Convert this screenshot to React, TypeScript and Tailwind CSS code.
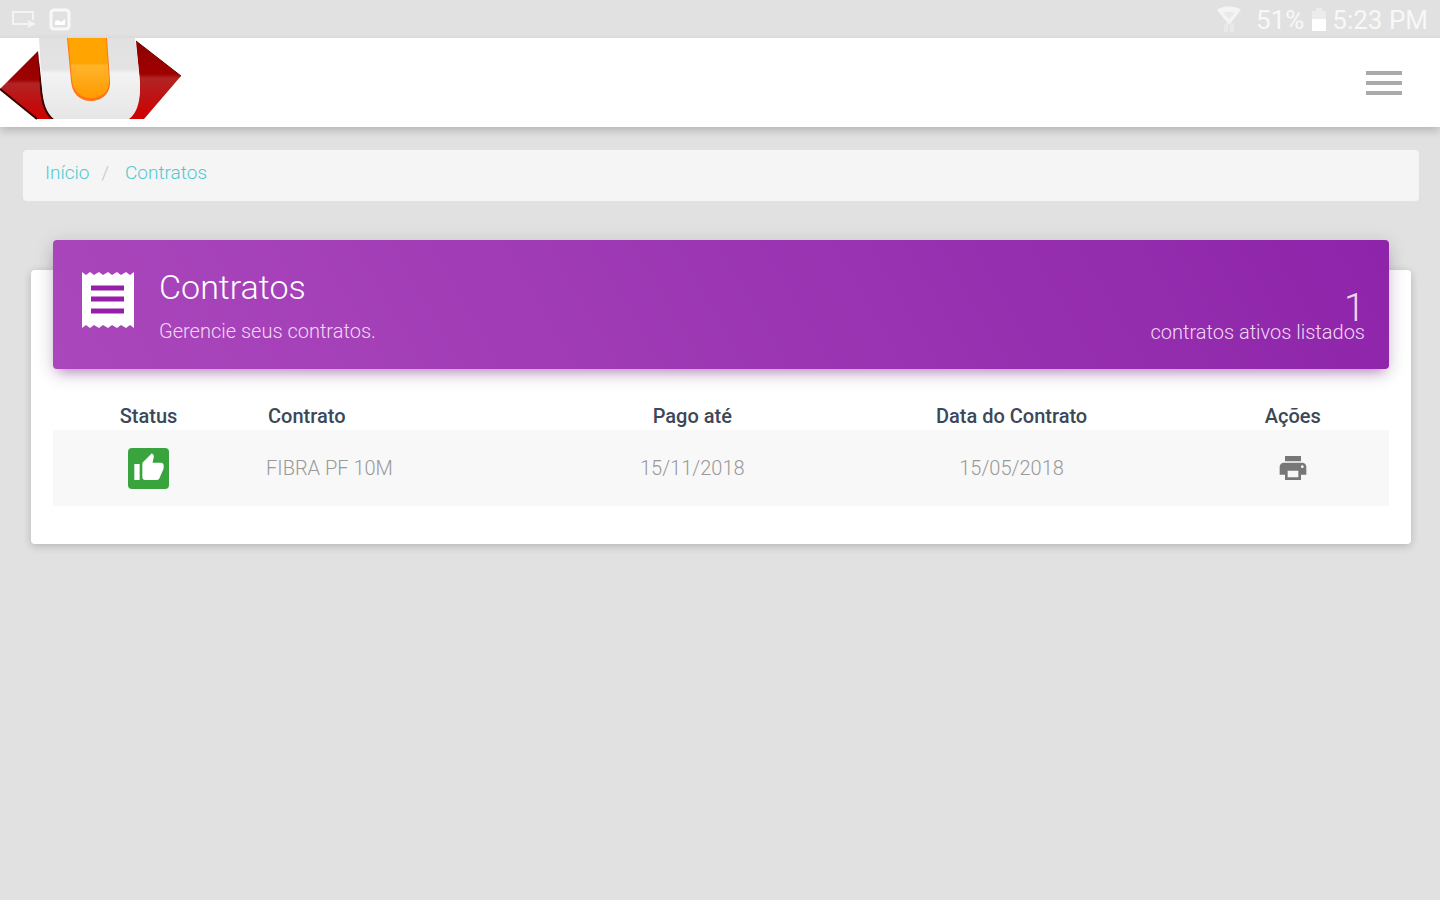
import React from "react";
import { MdMenu, MdPrint, MdThumbUp } from "react-icons/md";

const contracts = [
  { name: "FIBRA PF 10M", paidUntil: "15/11/2018", date: "15/05/2018" },
];

const Logo = () => {
  return (
    <svg viewBox="0 0 182 84" className="block h-[84px] w-[182px]" role="img" aria-label="Logo">
      <defs>
        <linearGradient id="red" x1="0" y1="0" x2="0" y2="1">
          <stop offset="0" stopColor="#8e0000" />
          <stop offset="0.42" stopColor="#a00000" />
          <stop offset="0.48" stopColor="#b22424" />
          <stop offset="0.75" stopColor="#c01010" />
          <stop offset="1" stopColor="#d00000" />
        </linearGradient>
        <linearGradient id="orange" x1="0" y1="0" x2="0" y2="1">
          <stop offset="0" stopColor="#ffa500" />
          <stop offset="0.42" stopColor="#ffa300" />
          <stop offset="0.46" stopColor="#ffb52a" />
          <stop offset="1" stopColor="#ff9a00" />
        </linearGradient>
        <linearGradient id="silver" x1="0" y1="0" x2="0" y2="1">
          <stop offset="0" stopColor="#e1e1e1" />
          <stop offset="0.38" stopColor="#e3e3e3" />
          <stop offset="0.44" stopColor="#f3f3f3" />
          <stop offset="1" stopColor="#e6e6e6" />
        </linearGradient>
      </defs>
      <path d="M0 51L38 13L41 50C43 66 47 76 54 81H36Z" fill="url(#red)" />
      <path d="M0 51L37 81" stroke="#3a0000" strokeWidth="2" />
      <path d="M136 3L181 38L144 81H128C137 73 140 62 140 46Z" fill="url(#red)" />
      <path d="M136 3L181 38" stroke="#6b0000" strokeWidth="1" />
      <path d="M38 14L42 50C44 66 48 75 54 81H51C44 75 41 64 40 50Z" fill="#3a0000" />
      <path d="M39 0H135C137 20 140 34 140 50C140 66 136 76 129 81H54C46 75 43 64 42 50Z" fill="url(#silver)" />
      <path d="M67 0H107L110 43C111 54 103 63 91 63C79 63 72 55 71 43Z" fill="#ff7414" />
      <path d="M68 0H106L109 42C110 53 102 60 91 60C80 60 73 53 72 42Z" fill="url(#orange)" />
    </svg>
  );
};

const ReceiptIcon = () => {
  return (
    <svg viewBox="0 0 54 58" className="mt-[31px] h-[58px] w-[54px]" aria-hidden="true">
      <path
        d="M1 1L5 4L9 1L13 4L18 1L22 4L27 1L31 4L36 1L40 4L45 1L49 4L53 1V57L49 54L45 57L40 54L36 57L31 54L27 57L22 54L18 57L13 54L9 57L5 54L1 57Z"
        fill="#fff"
      />
      <path d="M10 17H43M10 28H43M10 40H43" stroke="#951fa8" strokeWidth="5" />
    </svg>
  );
};

const StatusBar = () => {
  return (
    <div className="flex h-[38px] items-center justify-between px-3 pt-0.5 text-[26px] leading-8 text-[#f8f8f8]">
      <div className="flex items-center gap-3">
        <svg viewBox="0 0 24 20" className="h-5 w-6" fill="none" stroke="#f4f4f4" strokeWidth="2">
          <path d="M17 14H1V2H21V10" />
          <path d="M16 18V10L24 14Z" fill="#f4f4f4" stroke="none" />
        </svg>
        <svg viewBox="0 0 24 24" className="h-6 w-6" fill="none" stroke="#f8f8f8" strokeWidth="3">
          <rect x="3" y="2" width="18" height="19" rx="3" />
          <path d="M7 17V13L10 12L13 14L17 11V17Z" fill="#fff" stroke="none" />
        </svg>
      </div>
      <div className="flex items-center">
        <svg viewBox="0 0 26 28" className="mr-3.5 h-7 w-[26px]">
          <path d="M1 4C8 -1 18 -1 25 4L13 19Z" fill="#f4f4f4" />
          <path d="M7 7C11 5 15 5 19 7L13 13Z" fill="#e9e9e9" />
          <path d="M8 26V19L12 15V26ZM14 26V15L18 19V26Z" fill="#e9e9e9" />
        </svg>
        <span>51%</span>
        <svg viewBox="0 0 14 24" className="ml-2 mr-1.5 h-6 w-[14px]">
          <path d="M4 0H10V3H14V12H0V3H4Z" fill="#ececec" />
          <path d="M0 11H14V23H0Z" fill="#fff" />
        </svg>
        <span>5:23 PM</span>
      </div>
    </div>
  );
};

const Breadcrumb = () => {
  return (
    <nav
      aria-label="Breadcrumb"
      className="flex h-[51px] items-center rounded bg-[#f5f5f5] px-[22px] pb-1 text-[19px] font-light text-[#4fc8d2]"
    >
      <a href="#inicio">Início</a>
      <span className="px-3 pr-4 text-[#c4c4c4]">/</span>
      <a href="#contratos">Contratos</a>
    </nav>
  );
};

const CardHeader = () => {
  return (
    <div className="-mt-[30px] flex h-[129px] justify-between rounded bg-linear-60 from-[#ab47bc] to-[#8e24aa] pl-7 pr-6 text-white shadow-[0_4px_20px_rgba(0,0,0,0.14),0_7px_12px_-5px_rgba(156,39,176,0.5)]">
      <div className="flex">
        <ReceiptIcon />
        <div className="ml-6 pt-[25px] font-light">
          <h1 className="text-[34px] leading-[44px]">Contratos</h1>
          <p className="mt-2 text-xl leading-7 text-[#f0d8f4]">Gerencie seus contratos.</p>
        </div>
      </div>
      <div className="pt-[50px] text-right font-light text-[#f0d8f4]">
        <p className="text-[38px] leading-9">1</p>
        <p className="text-xl leading-3">contratos ativos listados</p>
      </div>
    </div>
  );
};

const ContractsTable = () => {
  return (
    <table className="mt-[33px] w-full table-fixed text-xl">
      <thead>
        <tr className="h-7 leading-7 text-[#3c4858]">
          <th className="w-[14.3%] font-medium">Status</th>
          <th className="w-[23.5%] pl-6 text-left font-medium">Contrato</th>
          <th className="w-[20.1%] font-medium">Pago até</th>
          <th className="w-[27.7%] font-medium">Data do Contrato</th>
          <th className="font-medium">Ações</th>
        </tr>
      </thead>
      <tbody>
        {contracts.map((contract) => (
          <tr key={contract.name} className="h-[76px] bg-[#f8f8f8] text-center font-light text-[#999]">
            <td>
              <span className="inline-flex size-[41px] items-center justify-center rounded bg-[#39a33d] align-middle text-white">
                <MdThumbUp className="size-8" />
              </span>
            </td>
            <td className="pl-[22px] text-left">{contract.name}</td>
            <td>{contract.paidUntil}</td>
            <td>{contract.date}</td>
            <td>
              <button type="button" aria-label="Imprimir" className="align-middle text-[#777]">
                <MdPrint className="size-8" />
              </button>
            </td>
          </tr>
        ))}
      </tbody>
    </table>
  );
};

const App = () => {
  return (
    <div className="min-h-screen bg-[#e1e1e1] font-[Roboto,sans-serif]">
      <StatusBar />
      <header className="flex h-[89px] items-center justify-between bg-white pr-8 shadow-[0_4px_8px_rgba(0,0,0,0.18)]">
        <a href="#inicio" className="self-start">
          <Logo />
        </a>
        <button type="button" aria-label="Menu" className="text-[#aaa]">
          <MdMenu className="size-12" />
        </button>
      </header>
      <main className="pl-[23px] pr-[21px] pt-[23px]">
        <Breadcrumb />
        <section className="mx-2 mt-[69px] flow-root rounded bg-white px-[22px] pb-[38px] shadow-[0_2px_8px_rgba(0,0,0,0.2)]">
          <CardHeader />
          <ContractsTable />
        </section>
      </main>
    </div>
  );
};

export default App;
